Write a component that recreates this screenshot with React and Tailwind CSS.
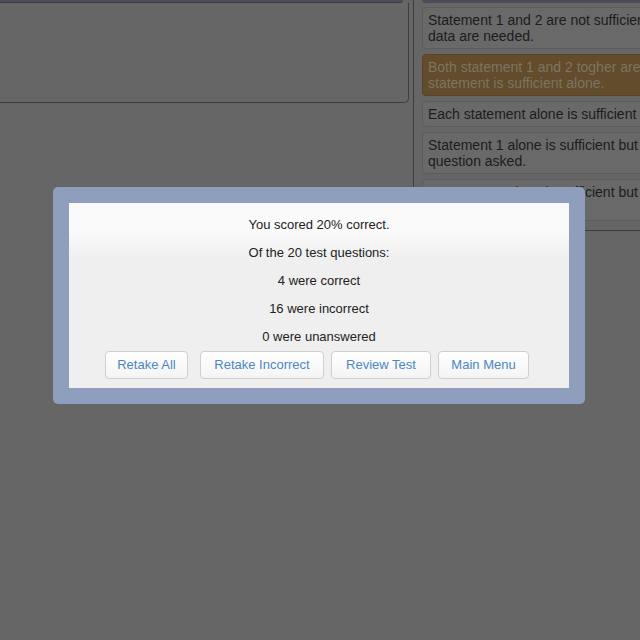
import React from "react";

const answers = [
  { lines: ["Statement 1 and 2 are not sufficient to answer", "data are needed."] },
  { lines: ["Both statement 1 and 2 togher are sufficient, but neither", "statement is sufficient alone."], selected: true },
  { lines: ["Each statement alone is sufficient to answer"] },
  { lines: ["Statement 1 alone is sufficient but statement 2 is not", "question asked."] },
  { lines: ["Statement 2 alone is sufficient but statement 1 is not", "question asked."] },
];

const stats = [
  "You scored 20% correct.",
  "Of the 20 test questions:",
  "4 were correct",
  "16 were incorrect",
  "0 were unanswered",
];

const buttons = [
  { label: "Retake All", cls: "w-[83px]" },
  { label: "Retake Incorrect", cls: "w-[124px] ml-[12px]" },
  { label: "Review Test", cls: "w-[100px] ml-[7px]" },
  { label: "Main Menu", cls: "w-[91px] ml-[7px]" },
];

const App = () => {
  return (
    <div
      className="relative w-[640px] h-[640px] overflow-hidden bg-[#666666]"
      style={{ fontFamily: '"Liberation Sans", Arial, sans-serif' }}
    >
      <div className="flex">
        {/* left question panel */}
        <div className="w-[409px] shrink-0">
          <div className="h-[3px] w-[403px] bg-[#4b4d58] border-b border-[#3a3b44] rounded-br-[3px]"></div>
          <div className="h-[100px] w-[409px] border-r border-b border-[#3d3d3d] rounded-br-[5px]"></div>
        </div>

        {/* right answers column */}
        <div className="ml-[4px] w-[300px] h-[231px] shrink-0 border-l border-b border-[#3d3d3d]">
          <div className="h-[3px] ml-[8px] bg-[#4b4d58] rounded-bl-[3px]"></div>
          <div className="flex flex-col gap-[5px] pl-[8px] pt-[4px]">
            {answers.map((a, i) => (
              <div
                key={i}
                className={`whitespace-nowrap overflow-hidden rounded-[4px] border px-[5px] py-[4px] text-[14px] leading-[16px] ${
                  a.selected
                    ? "bg-[#624c2c] border-[#574428] text-[#7f7462]"
                    : "bg-[#696969] border-[#5c5c5c] text-[#1c1c1c]"
                }`}
              >
                {a.lines.map((l, j) => (
                  <div key={j}>{l}</div>
                ))}
              </div>
            ))}
          </div>
        </div>
      </div>

      {/* results dialog */}
      <div className="absolute left-[53px] top-[187px] w-[532px] h-[217px] rounded-[5px] bg-[#8f9ebd] p-[16px]">
        <div className="h-full bg-gradient-to-b from-[#fafafa] from-[15%] to-[#efefef] to-[30%] flex flex-col items-center pt-[14px]">
          {stats.map((s) => (
            <div key={s} className="text-[13px] leading-[16px] h-[28px] text-[#222222]">
              {s}
            </div>
          ))}
          <div className="flex -mt-[6px] ml-[-4px]">
            {buttons.map((b) => (
              <button
                key={b.label}
                className={`h-[28px] rounded-[4px] border border-[#cfcfcf] bg-gradient-to-b from-white to-[#f4f4f4] text-[13px] text-[#4a87c6] ${b.cls}`}
              >
                {b.label}
              </button>
            ))}
          </div>
        </div>
      </div>
    </div>
  );
};

export default App;
